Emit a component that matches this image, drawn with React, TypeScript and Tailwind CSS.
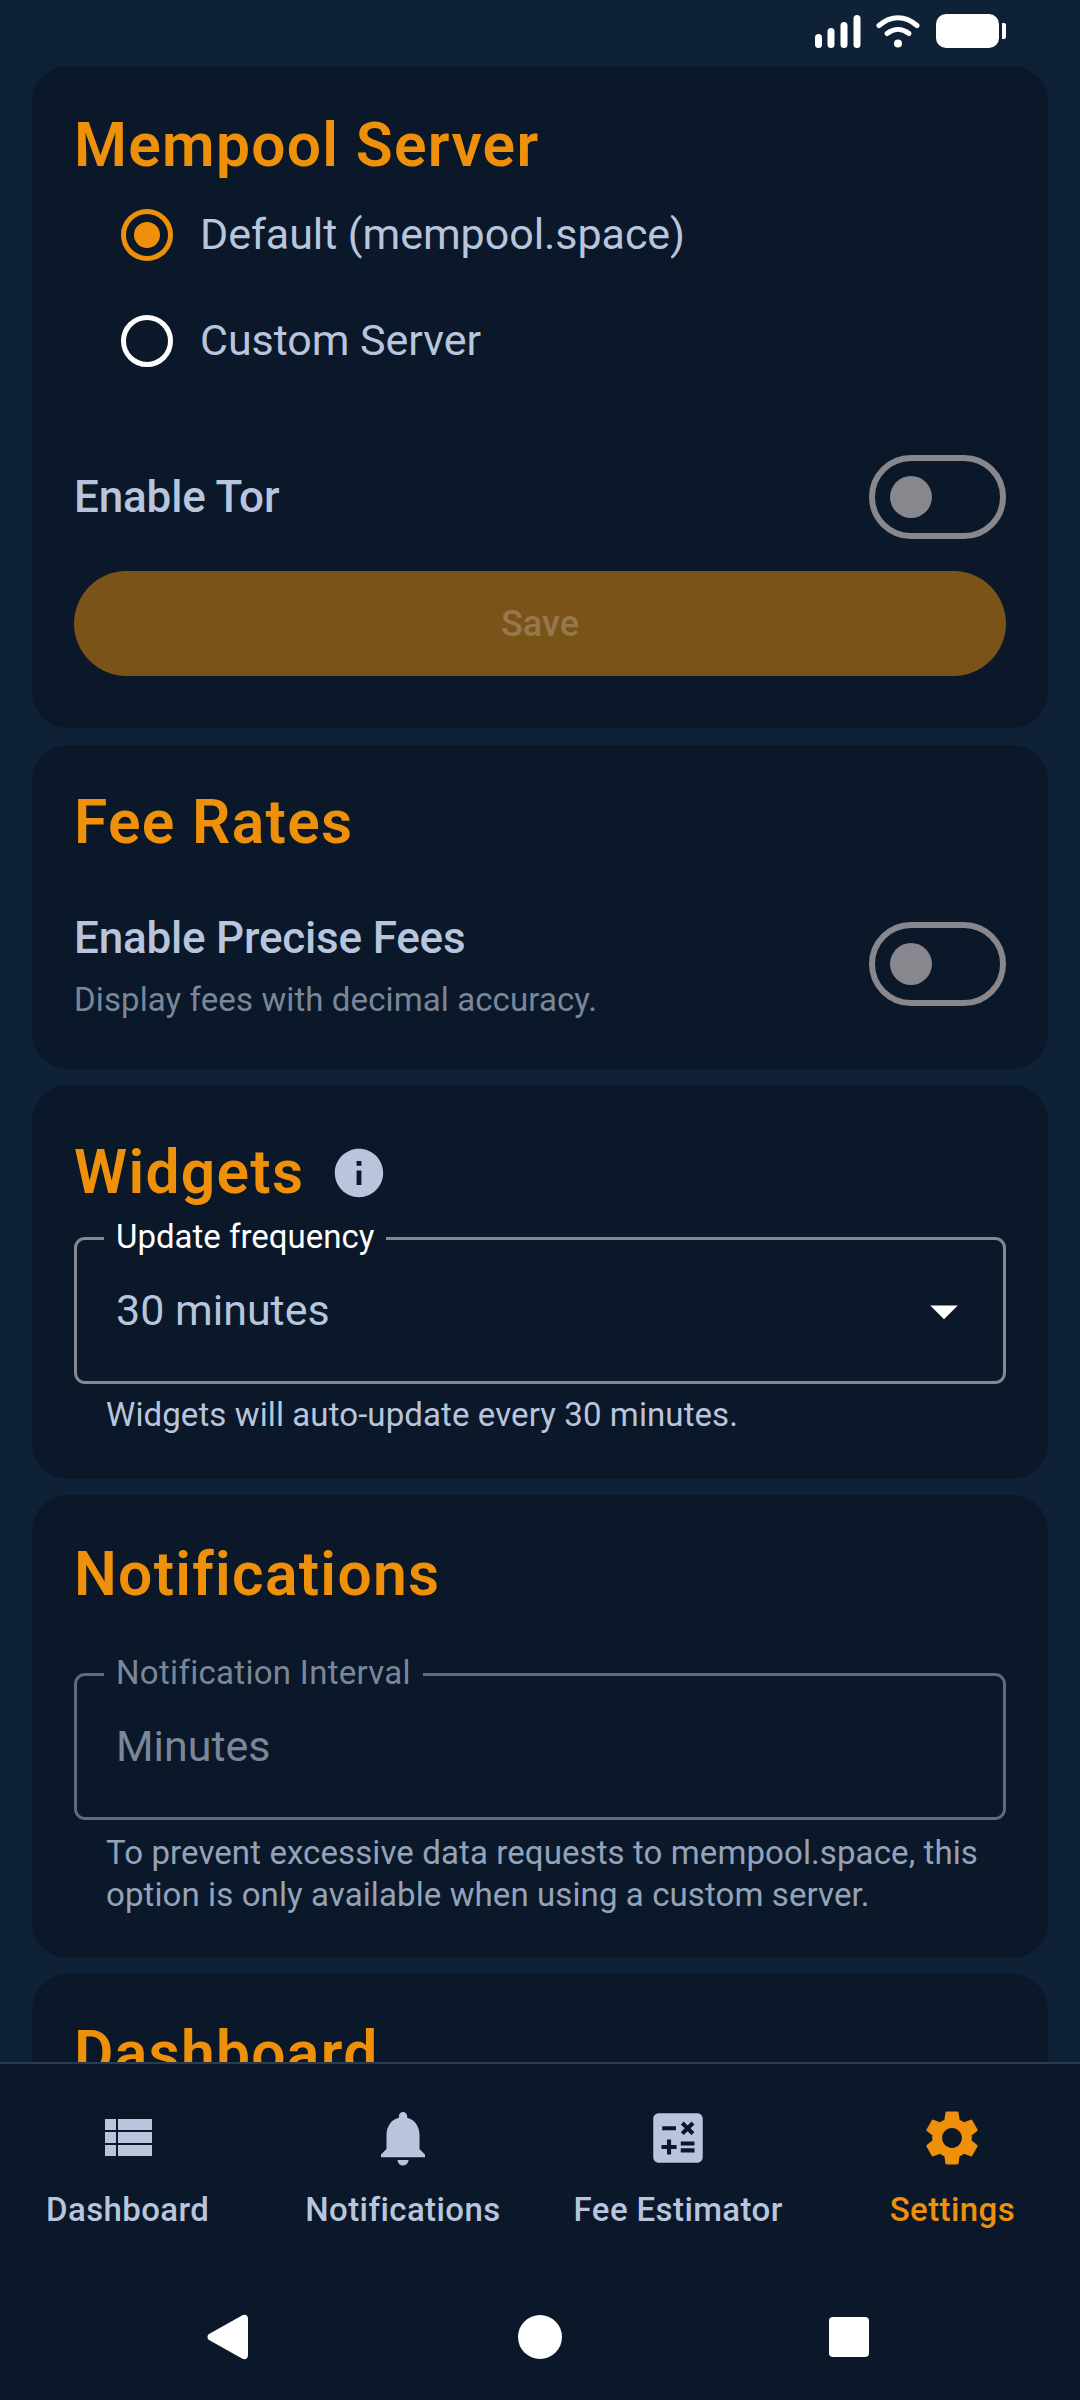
import { MdNotifications, MdCalculate, MdSettings, MdInfo, MdArrowDropDown } from "react-icons/md";

function Radio({ checked, label }: { checked?: boolean; label: string }) {
  return (
    <div className="flex h-[106px] items-center pl-[47px]">
      <div className={`flex h-[52px] w-[52px] items-center justify-center rounded-full border-[5px] ${checked ? "border-[#ee9009]" : "border-white"}`}>
        {checked && <div className="h-[26px] w-[26px] rounded-full bg-[#ee9009]" />}
      </div>
      <span className="ml-[27px] -mt-[2px] text-[43px] leading-[58px] tracking-[-0.05px] text-[#b8c5dc]">{label}</span>
    </div>
  );
}

function Switch({ className = "" }: { className?: string }) {
  return (
    <div className={`flex h-[84px] w-[137px] shrink-0 items-center rounded-full border-[6px] border-[#88878d] pl-[15px] ${className}`}>
      <div className="h-[42px] w-[42px] rounded-full bg-[#88878d]" />
    </div>
  );
}

function Title({ children }: { children: React.ReactNode }) {
  return <h2 className="text-[60.5px] font-semibold leading-[72px] tracking-[1.3px] text-[#ee9009]">{children}</h2>;
}

function NavItem({ label, active, ml, icon }: { label: string; active?: boolean; ml: string; icon: React.ReactNode }) {
  return (
    <div className={`flex flex-col items-center ${ml} ${active ? "text-[#ee9009]" : "text-[#b8c5dc]"}`}>
      <div className="flex h-[66px] items-center justify-center">{icon}</div>
      <span className="mt-[17px] text-[33px] font-medium leading-[44px] tracking-[0.4px] whitespace-nowrap">{label}</span>
    </div>
  );
}

function ViewListIcon() {
  return (
    <svg width="66" height="66" viewBox="0 0 66 66" fill="currentColor">
      <rect x="10" y="14" width="11" height="11" />
      <rect x="23" y="14" width="34" height="11" />
      <rect x="10" y="27" width="11" height="11" />
      <rect x="23" y="27" width="34" height="11" />
      <rect x="10" y="40" width="11" height="11" />
      <rect x="23" y="40" width="34" height="11" />
    </svg>
  );
}

export default function App() {
  return (
    <div className="flex h-[2400px] w-[1080px] flex-col overflow-hidden bg-[#0f2136] font-['Roboto',sans-serif]">
      <div className="min-h-0 flex-1 overflow-hidden">
        <div className="flex h-[66px] items-start justify-end pr-[74px] pt-[14px]">
          <svg width="46" height="34" viewBox="0 0 46 34" fill="#fff" className="mt-[1px]">
            <rect x="0" y="19" width="7" height="14" rx="3.5" />
            <rect x="12.5" y="13" width="7" height="20" rx="3.5" />
            <rect x="25.5" y="7" width="7" height="26" rx="3.5" />
            <rect x="38.5" y="0" width="7" height="33" rx="3.5" />
          </svg>
          <svg width="44" height="34" viewBox="0 0 44 34" fill="none" stroke="#fff" strokeWidth="5" strokeLinecap="round" className="ml-[15px] mt-[1px]">
            <path d="M3 10.5C15 0 29 0 41 10.5" />
            <path d="M11 18.5C18 13 26 13 33 18.5" />
            <circle cx="22" cy="28.5" r="4" fill="#fff" stroke="none" />
          </svg>
          <div className="ml-[16px] flex items-center">
            <div className="h-[34px] w-[63px] rounded-[10px] bg-white" />
            <div className="ml-[3px] h-[16px] w-[4px] rounded-r-[2px] bg-white" />
          </div>
        </div>

        <div className="flex flex-col gap-4 px-[32px]">
          <section className="rounded-[36px] bg-[#0a1829] pb-[52px] pl-[42px] pr-[42px] pt-[44px]">
            <Title>Mempool Server</Title>
            <Radio checked label="Default (mempool.space)" />
            <Radio label="Custom Server" />
            <div className="mt-[61px] flex h-[84px] items-center justify-between">
              <span className="text-[44px] font-medium leading-[60px] tracking-[-0.15px] text-[#b8c5dc]">Enable Tor</span>
              <Switch />
            </div>
            <div className="mt-[32px] flex h-[105px] items-center justify-center rounded-full bg-[#7a5319] text-[36px] font-medium text-[#96784b]">Save</div>
          </section>

          <section className="mt-[1px] rounded-[36px] bg-[#0a1829] pb-[46px] pl-[42px] pr-[42px] pt-[42px]">
            <Title>Fee Rates</Title>
            <div className="mt-[54px] flex items-start justify-between">
              <div>
                <div className="text-[44px] font-medium leading-[50px] tracking-[-0.2px] text-[#b8c5dc]">Enable Precise Fees</div>
                <div className="mt-[14px] text-[33px] leading-[46px] tracking-[0.1px] text-[#7a8799]">Display fees with decimal accuracy.</div>
              </div>
              <Switch className="mt-[9px]" />
            </div>
          </section>

          <section className="rounded-[36px] bg-[#0a1829] pb-[43px] pl-[42px] pr-[42px] pt-[52px]">
            <div className="flex items-center">
              <Title>Widgets</Title>
              <MdInfo className="ml-[26px] text-[#b8c5dc]" size={58} />
            </div>
            <div className="relative mt-[28px] flex h-[147px] items-center justify-between rounded-[11px] border-[3px] border-[#88878d] pl-[39px] pr-[26px]">
              <span className="absolute left-[27px] top-[-25px] bg-[#0a1829] px-[12px] text-[33px] leading-[44px] text-white">Update frequency</span>
              <span className="-mt-[2px] text-[43px] leading-[60px] text-[#b8c5dc]">30 minutes</span>
              <MdArrowDropDown className="text-white" size={66} />
            </div>
            <p className="mt-[10px] pl-[32px] text-[33px] leading-[42px] tracking-[0.1px] text-[#b8c5dc]">Widgets will auto-update every 30 minutes.</p>
          </section>

          <section className="rounded-[36px] bg-[#0a1829] pb-[42px] pl-[42px] pr-[42px] pt-[44px]">
            <Title>Notifications</Title>
            <div className="relative mt-[62px] flex h-[147px] items-center rounded-[11px] border-[3px] border-[#5d6b80] pl-[39px]">
              <span className="absolute left-[27px] top-[-25px] bg-[#0a1829] px-[12px] text-[33px] leading-[44px] tracking-[0.3px] text-[#7b8798]">Notification Interval</span>
              <span className="-mt-[2px] text-[43px] leading-[60px] text-[#7b8798]">Minutes</span>
            </div>
            <p className="mt-[12px] pl-[32px] text-[33px] leading-[42px] tracking-[0.1px] text-[#94a3b8]">
              To prevent excessive data requests to mempool.space, this<br />option is only available when using a custom server.
            </p>
          </section>

          <section className="rounded-[36px] bg-[#0a1829] pb-[44px] pl-[42px] pr-[42px] pt-[44px]">
            <Title>Dashboard</Title>
          </section>
        </div>
      </div>

      <nav className="h-[338px] shrink-0 border-t-2 border-[#2a3a4f] bg-[#0a1829]">
        <div className="flex pt-[41px]">
          <NavItem label="Dashboard" ml="ml-[46px]" icon={<ViewListIcon />} />
          <NavItem label="Notifications" ml="ml-[96px]" icon={<MdNotifications size={66} />} />
          <NavItem label="Fee Estimator" ml="ml-[73px]" icon={<MdCalculate size={66} />} />
          <NavItem label="Settings" active ml="ml-[107px]" icon={<MdSettings size={66} />} />
        </div>
        <div className="mt-[82px] flex items-center">
          <svg width="42" height="46" viewBox="0 0 42 46" fill="#fff" className="ml-[207px]">
            <path d="M2 20L35 1.5C38 0 41 1 41 5V41C41 45 38 46 35 44.5L2 26C0 25 0 21 2 20Z" />
          </svg>
          <div className="ml-[269px] h-[44px] w-[44px] rounded-full bg-white" />
          <div className="ml-[267px] h-[40px] w-[40px] rounded-[4px] bg-white" />
        </div>
      </nav>
    </div>
  );
}
